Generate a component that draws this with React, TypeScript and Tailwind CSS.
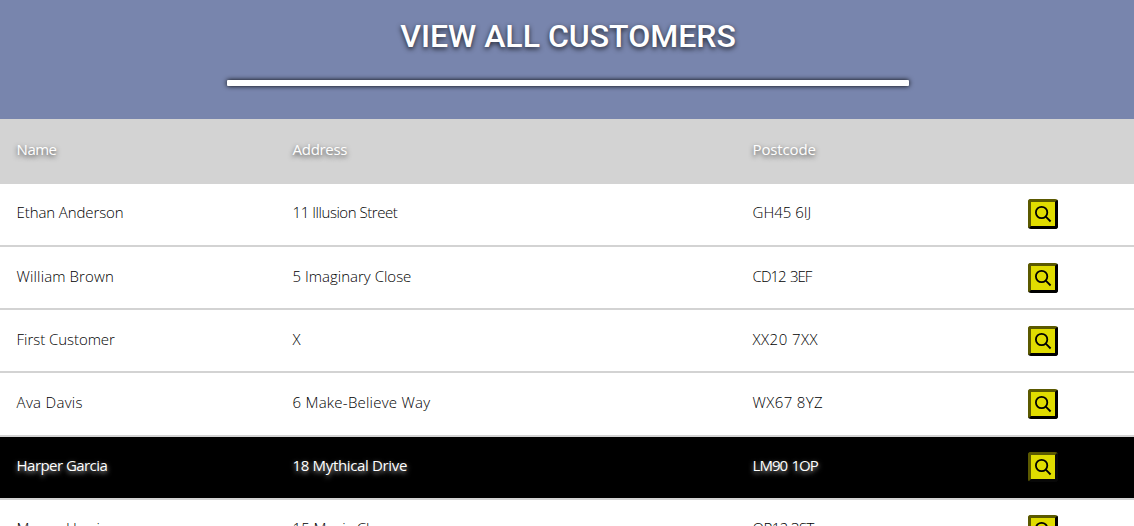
type Cell = { text: string; spacing?: string };
type Customer = { name: Cell; address: Cell; postcode: Cell };

const customers: Customer[] = [
  {
    name: { text: "Ethan Anderson", spacing: "tracking-[-0.1px]" },
    address: { text: "11 Illusion Street", spacing: "tracking-[-0.45px]" },
    postcode: { text: "GH45 6IJ" },
  },
  {
    name: { text: "William Brown", spacing: "tracking-[0.12px]" },
    address: { text: "5 Imaginary Close" },
    postcode: { text: "CD12 3EF", spacing: "tracking-[-1px] [word-spacing:1.5px]" },
  },
  {
    name: { text: "First Customer", spacing: "tracking-[-0.05px]" },
    address: { text: "X" },
    postcode: { text: "XX20 7XX", spacing: "tracking-[0.45px]" },
  },
  {
    name: { text: "Ava Davis", spacing: "tracking-[0.3px]" },
    address: { text: "6 Make-Believe Way", spacing: "tracking-[0.23px]" },
    postcode: { text: "WX67 8YZ", spacing: "tracking-[0.35px]" },
  },
  {
    name: { text: "Harper Garcia", spacing: "tracking-[-0.55px]" },
    address: { text: "18 Mythical Drive", spacing: "tracking-[-0.35px]" },
    postcode: { text: "LM90 1OP", spacing: "tracking-[-1px] [word-spacing:1.5px]" },
  },
  {
    name: { text: "Mason Harris" },
    address: { text: "15 Magic Close" },
    postcode: { text: "QR12 3ST", spacing: "tracking-[-0.6px]" },
  },
];

const highlighted = "Harper Garcia";
const columns = "grid grid-cols-[276px_460px_275px_1fr] border-b-2 border-[#d3d3d3] pl-[16.6px]";

function SearchIcon() {
  return (
    <svg width="18" height="18" viewBox="0 0 18 18" fill="none" stroke="currentColor" strokeWidth="1.8" aria-hidden="true">
      <circle cx="7.6" cy="7.5" r="5.7" />
      <path d="M11.8 11.7 L16.6 16.5" />
    </svg>
  );
}

function Row({ customer }: { customer: Customer }) {
  const active = customer.name.text === highlighted;
  const tone = active
    ? "bg-black font-normal text-white [text-shadow:0_2px_5px_#ffffffb0]"
    : "bg-white font-light text-black";
  return (
    <div className={`${columns} h-[63.2px] ${tone}`}>
      {[customer.name, customer.address, customer.postcode].map((cell) => (
        <span key={cell.text} className={`pt-[16.65px] ${cell.spacing ?? ""}`}>
          {cell.text}
        </span>
      ))}
      <span className="pt-[15.6px]">
        <button
          aria-label="View customer"
          className={`flex size-[30px] items-center justify-center rounded-[3px] border-3 border-t-[#5b5900] border-l-[#5b5900] bg-[#e0dc00] text-black ${active ? "border-r-[#080808] border-b-[#080808]" : "border-r-black border-b-black"}`}
        >
          <SearchIcon />
        </button>
      </span>
    </div>
  );
}

export default function App() {
  return (
    <div className="h-[526px] overflow-hidden bg-white font-['Open_Sans',sans-serif] text-[15px] leading-6">
      <header className="flex h-[119px] flex-col items-center bg-[#7885ad]">
        <h1 className="mt-4 ml-[2px] font-[Roboto,sans-serif] text-[32px] leading-10 font-medium text-white [text-shadow:0_2px_5px_#000000c0]">
          VIEW ALL CUSTOMERS
        </h1>
        <div className="mt-6 ml-[2px] h-[6px] w-[682px] rounded-[1px] bg-white shadow-[0_0_5px_#000]" />
      </header>
      <div className={`${columns} h-[64.8px] bg-[#d3d3d3] font-normal text-white [text-shadow:0_2px_5px_#000000b0]`}>
        <span className="pt-[18px] tracking-[-0.5px]">Name</span>
        <span className="pt-[18px] tracking-[-0.3px]">Address</span>
        <span className="pt-[18px] tracking-[-0.15px]">Postcode</span>
      </div>
      {customers.map((customer) => (
        <Row key={customer.name.text} customer={customer} />
      ))}
    </div>
  );
}
